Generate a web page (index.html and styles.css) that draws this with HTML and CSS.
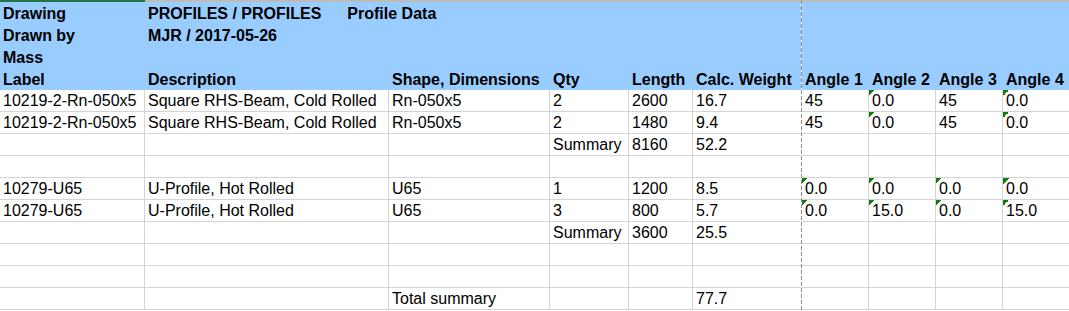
FILE: index.html
```html
<!DOCTYPE html>
<html lang="en">
<head>
<meta charset="utf-8">
<title>Profile Data</title>
<link rel="stylesheet" href="styles.css">
</head>
<body>
<div class="sheet">
  <div class="top-edge"><span class="top-sel"></span></div>

  <div class="head">
    <div class="row">
      <div class="cell">Drawing</div>
      <div class="cell span-rest"><span>PROFILES / PROFILES</span><span class="title-extra">Profile Data</span></div>
    </div>
    <div class="row">
      <div class="cell">Drawn by</div>
      <div class="cell span-rest">MJR / 2017-05-26</div>
    </div>
    <div class="row">
      <div class="cell">Mass</div>
      <div class="cell span-rest"></div>
    </div>
    <div class="row">
      <div class="cell">Label</div>
      <div class="cell">Description</div>
      <div class="cell">Shape, Dimensions</div>
      <div class="cell">Qty</div>
      <div class="cell">Length</div>
      <div class="cell">Calc. Weight</div>
      <div class="cell">Angle 1</div>
      <div class="cell">Angle 2</div>
      <div class="cell">Angle 3</div>
      <div class="cell">Angle 4</div>
    </div>
  </div>

  <div class="grid">
    <div class="row">
      <div class="cell">10219-2-Rn-050x5</div>
      <div class="cell">Square RHS-Beam, Cold Rolled</div>
      <div class="cell">Rn-050x5</div>
      <div class="cell">2</div>
      <div class="cell">2600</div>
      <div class="cell">16.7</div>
      <div class="cell">45</div>
      <div class="cell flag">0.0</div>
      <div class="cell">45</div>
      <div class="cell flag">0.0</div>
    </div>
    <div class="row">
      <div class="cell">10219-2-Rn-050x5</div>
      <div class="cell">Square RHS-Beam, Cold Rolled</div>
      <div class="cell">Rn-050x5</div>
      <div class="cell">2</div>
      <div class="cell">1480</div>
      <div class="cell">9.4</div>
      <div class="cell">45</div>
      <div class="cell flag">0.0</div>
      <div class="cell">45</div>
      <div class="cell flag">0.0</div>
    </div>
    <div class="row">
      <div class="cell"></div>
      <div class="cell"></div>
      <div class="cell"></div>
      <div class="cell">Summary</div>
      <div class="cell">8160</div>
      <div class="cell">52.2</div>
      <div class="cell"></div>
      <div class="cell"></div>
      <div class="cell"></div>
      <div class="cell"></div>
    </div>
    <div class="row">
      <div class="cell"></div><div class="cell"></div><div class="cell"></div><div class="cell"></div><div class="cell"></div>
      <div class="cell"></div><div class="cell"></div><div class="cell"></div><div class="cell"></div><div class="cell"></div>
    </div>
    <div class="row">
      <div class="cell">10279-U65</div>
      <div class="cell">U-Profile, Hot Rolled</div>
      <div class="cell">U65</div>
      <div class="cell">1</div>
      <div class="cell">1200</div>
      <div class="cell">8.5</div>
      <div class="cell flag">0.0</div>
      <div class="cell flag">0.0</div>
      <div class="cell flag">0.0</div>
      <div class="cell flag">0.0</div>
    </div>
    <div class="row">
      <div class="cell">10279-U65</div>
      <div class="cell">U-Profile, Hot Rolled</div>
      <div class="cell">U65</div>
      <div class="cell">3</div>
      <div class="cell">800</div>
      <div class="cell">5.7</div>
      <div class="cell flag">0.0</div>
      <div class="cell flag">15.0</div>
      <div class="cell flag">0.0</div>
      <div class="cell flag">15.0</div>
    </div>
    <div class="row">
      <div class="cell"></div>
      <div class="cell"></div>
      <div class="cell"></div>
      <div class="cell">Summary</div>
      <div class="cell">3600</div>
      <div class="cell">25.5</div>
      <div class="cell"></div>
      <div class="cell"></div>
      <div class="cell"></div>
      <div class="cell"></div>
    </div>
    <div class="row">
      <div class="cell"></div><div class="cell"></div><div class="cell"></div><div class="cell"></div><div class="cell"></div>
      <div class="cell"></div><div class="cell"></div><div class="cell"></div><div class="cell"></div><div class="cell"></div>
    </div>
    <div class="row">
      <div class="cell"></div><div class="cell"></div><div class="cell"></div><div class="cell"></div><div class="cell"></div>
      <div class="cell"></div><div class="cell"></div><div class="cell"></div><div class="cell"></div><div class="cell"></div>
    </div>
    <div class="row">
      <div class="cell"></div>
      <div class="cell"></div>
      <div class="cell">Total summary</div>
      <div class="cell"></div>
      <div class="cell"></div>
      <div class="cell">77.7</div>
      <div class="cell"></div>
      <div class="cell"></div>
      <div class="cell"></div>
      <div class="cell"></div>
    </div>
  </div>

  <div class="page-break"></div>
</div>
</body>
</html>
```

FILE: styles.css
```css
* {
  box-sizing: border-box;
}

html,
body {
  margin: 0;
  padding: 0;
  background: #ffffff;
}

body {
  width: 1069px;
  height: 311px;
  overflow: hidden;
  font-family: "Liberation Sans", Arial, sans-serif;
  font-size: 16px;
  color: #000000;
}

.sheet {
  position: relative;
  width: 1070px;
}

.top-edge {
  display: flex;
  height: 2px;
  background: #bcbcbc;
}

.top-sel {
  width: 145px;
  background: #217346;
}

.row {
  display: grid;
  grid-template-columns: 145px 244px 161px 79px 64px 109px 67px 67px 67px 67px;
  height: 22px;
}

.cell {
  position: relative;
  white-space: nowrap;
  line-height: 21px;
  padding-left: 3px;
}

.head {
  background: #99ccff;
  font-weight: bold;
}

.head .cell {
  padding-top: 1px;
}

.span-rest {
  grid-column: 2 / -1;
}

.title-extra {
  margin-left: 26px;
}

.grid .cell {
  border-right: 1px solid #d4d4d4;
  border-bottom: 1px solid #d4d4d4;
}

.flag::before {
  content: "";
  position: absolute;
  left: 0;
  top: 0;
  width: 6px;
  height: 6px;
  background: linear-gradient(135deg, #0e7c0e 50%, transparent 50%);
}

.page-break {
  position: absolute;
  left: 801px;
  top: 0;
  width: 1px;
  height: 100%;
  background: repeating-linear-gradient(to bottom, #8e8e8e 0 4px, #ffffff 4px 6px);
}
```
